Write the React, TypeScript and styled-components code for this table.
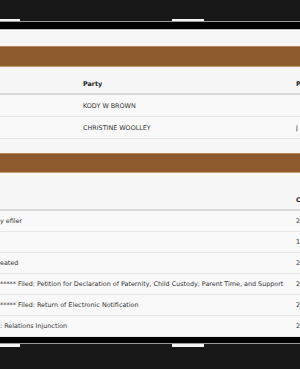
import React from "react";
import styled, { createGlobalStyle } from "styled-components";

const Global = createGlobalStyle`
  html, body {
    margin: 0;
    padding: 0;
    width: 300px;
    height: 369px;
    overflow: hidden;
    background: #171717;
  }
  * { box-sizing: border-box; }
`;

const Frame = styled.div`
  width: 300px;
  height: 369px;
  display: flex;
  flex-direction: column;
  background: #171717;
  overflow: hidden;
  font-family: "DejaVu Sans", Verdana, sans-serif;
`;

const Dark = styled.div<{ $h: number }>`
  height: ${(p) => p.$h}px;
  flex: none;
  background: #171717;
`;

const Sprockets = styled.div<{ $h: number }>`
  height: ${(p) => p.$h}px;
  flex: none;
  display: flex;
  background: #171717;
`;

const Hole = styled.div<{ $w: number; $ml: number }>`
  width: ${(p) => p.$w}px;
  margin-left: ${(p) => p.$ml}px;
  background: #f4f4f4;
`;

const Rail = styled.div<{ $c: string }>`
  height: 1px;
  flex: none;
  background: ${(p) => p.$c};
`;

const BlackBand = styled.div<{ $h: number }>`
  height: ${(p) => p.$h}px;
  flex: none;
  background: #020202;
`;

const Screen = styled.div`
  height: 307px;
  flex: none;
  background: #f6f6f7;
  display: flex;
  flex-direction: column;
  overflow: hidden;
  color: #333;
  font-size: 6.4px;
  white-space: nowrap;
`;

const Spacer = styled.div<{ $h: number }>`
  height: ${(p) => p.$h}px;
  flex: none;
`;

const Banner = styled.div<{ $h: number }>`
  height: ${(p) => p.$h}px;
  flex: none;
  background: #8d5a2e;
  border-top: 1px solid #b7875c;
  border-bottom: 1px solid #c49a72;
`;

const Row = styled.div<{ $cols: string; $h: number; $head?: boolean }>`
  display: grid;
  grid-template-columns: ${(p) => p.$cols};
  height: ${(p) => p.$h}px;
  flex: none;
  align-items: ${(p) => (p.$head ? "end" : "center")};
  padding-bottom: ${(p) => (p.$head ? 5 : 0)}px;
  border-bottom: ${(p) => (p.$head ? "2px solid #dadada" : "1px solid #e6e6e6")};
  background: ${(p) => (p.$head ? "#f7f7f8" : "#f9f9f9")};
  font-weight: ${(p) => (p.$head ? 700 : 400)};
  color: ${(p) => (p.$head ? "#1e1e1e" : "#333")};
`;

const Cell = styled.div`
  overflow: hidden;
  line-height: 8px;
`;

const partyCols = "83px 213px 60px";
const docCols = "296px 60px";

const parties = [
  { name: "KODY W BROWN", kind: "" },
  { name: "CHRISTINE WOOLLEY", kind: "J" },
];

const docs = [
  { text: "y efiler", date: "2" },
  { text: "", date: "1" },
  { text: "eated", date: "2" },
  {
    text: "***** Filed: Petition for Declaration of Paternity, Child Custody, Parent Time, and Support",
    date: "2",
  },
  { text: "***** Filed: Return of Electronic Notification", date: "2" },
  { text: ": Relations Injunction", date: "2" },
];

function FilmEdge({ top }: { top: boolean }) {
  const holes = (
    <Sprockets $h={top ? 2 : 3}>
      <Hole $w={20} $ml={0} />
      <Hole $w={32} $ml={152} />
    </Sprockets>
  );
  if (top) {
    return (
      <>
        <Dark $h={19} />
        {holes}
        <Rail $c="#9a9a9a" />
        <BlackBand $h={7} />
        <Rail $c="#bdbdbd" />
      </>
    );
  }
  return (
    <>
      <BlackBand $h={6} />
      <Rail $c="#9a9a9a" />
      {holes}
      <Dark $h={22} />
    </>
  );
}

export default function App() {
  return (
    <>
      <Global />
      <Frame>
        <FilmEdge top />
        <Screen>
          <Spacer $h={16} />
          <Banner $h={21} />
          <Row $cols={partyCols} $h={28} $head>
            <Cell />
            <Cell>Party</Cell>
            <Cell>P</Cell>
          </Row>
          {parties.map((p) => (
            <Row key={p.name} $cols={partyCols} $h={22}>
              <Cell />
              <Cell>{p.name}</Cell>
              <Cell>{p.kind}</Cell>
            </Row>
          ))}
          <Spacer $h={14} />
          <Banner $h={20} />
          <Row $cols={docCols} $h={38} $head>
            <Cell />
            <Cell>C</Cell>
          </Row>
          {docs.map((d, i) => (
            <Row key={i} $cols={docCols} $h={21}>
              <Cell>{d.text}</Cell>
              <Cell>{d.date}</Cell>
            </Row>
          ))}
        </Screen>
        <FilmEdge top={false} />
      </Frame>
    </>
  );
}
